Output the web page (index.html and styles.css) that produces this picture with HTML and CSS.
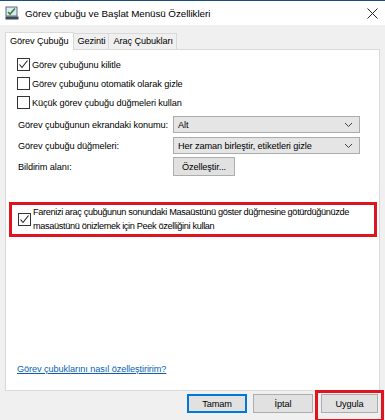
FILE: index.html
```html
<!DOCTYPE html>
<html lang="tr">
<head>
<meta charset="utf-8">
<link rel="stylesheet" href="styles.css">
</head>
<body>
<div class="window">
  <div class="titlebar">
    <svg class="appicon" width="14" height="14" viewBox="0 0 14 14">
      <rect x="1" y="1" width="11" height="9" fill="#dfe9f5" stroke="#5a6a7a" stroke-width="1"/>
      <path d="M3 6 L5 8 L10 2.5" fill="none" stroke="#2a8a2a" stroke-width="1.6"/>
      <rect x="0.5" y="10.5" width="13" height="3" fill="#3b4a5a"/>
    </svg>
    <span class="title">Görev çubuğu ve Başlat Menüsü Özellikleri</span>
    <svg class="close" width="11" height="11" viewBox="0 0 11 11">
      <path d="M0.5 0.5 L10.5 10.5 M10.5 0.5 L0.5 10.5" stroke="#222" stroke-width="1"/>
    </svg>
  </div>
  <div class="content">
    <div class="tabs">
      <div class="tab active">Görev Çubuğu</div>
      <div class="tab">Gezinti</div>
      <div class="tab">Araç Çubukları</div>
    </div>
    <div class="panel">
      <div class="check-row">
        <span class="box checked"><svg width="11" height="11" viewBox="0 0 11 11"><path d="M1.5 5.5 L4 8.5 L9.5 1.5" fill="none" stroke="#222" stroke-width="1.1"/></svg></span>
        <span>Görev çubuğunu kilitle</span>
      </div>
      <div class="check-row">
        <span class="box"></span>
        <span>Görev çubuğunu otomatik olarak gizle</span>
      </div>
      <div class="check-row">
        <span class="box"></span>
        <span>Küçük görev çubuğu düğmeleri kullan</span>
      </div>
      <div class="field-row first">
        <span class="label">Görev çubuğunun ekrandaki konumu:</span>
        <div class="select"><span>Alt</span><svg width="9" height="6" viewBox="0 0 9 6"><path d="M1 1 L4.5 4.5 L8 1" fill="none" stroke="#444" stroke-width="1"/></svg></div>
      </div>
      <div class="field-row">
        <span class="label">Görev çubuğu düğmeleri:</span>
        <div class="select"><span>Her zaman birleştir, etiketleri gizle</span><svg width="9" height="6" viewBox="0 0 9 6"><path d="M1 1 L4.5 4.5 L8 1" fill="none" stroke="#444" stroke-width="1"/></svg></div>
      </div>
      <div class="field-row">
        <span class="label">Bildirim alanı:</span>
        <div class="button small">Özelleştir...</div>
      </div>
      <div class="highlight">
        <span class="box checked"><svg width="11" height="11" viewBox="0 0 11 11"><path d="M1.5 5.5 L4 8.5 L9.5 1.5" fill="none" stroke="#222" stroke-width="1.1"/></svg></span>
        <span class="hl-text">Farenizi araç çubuğunun sonundaki Masaüstünü göster düğmesine götürdüğünüzde masaüstünü önizlemek için Peek özelliğini kullan</span>
      </div>
      <div class="spacer"></div>
      <a class="link" href="#">Görev çubuklarını nasıl özelleştiririm?</a>
    </div>
    <div class="footer">
      <div class="button default">Tamam</div>
      <div class="button">İptal</div>
      <div class="apply-wrap"><div class="button">Uygula</div></div>
    </div>
  </div>
</div>
</body>
</html>
```
FILE: styles.css
```css
* { box-sizing: border-box; }
html, body { margin: 0; padding: 0; }
body {
  font-family: "Liberation Sans", Arial, sans-serif;
  font-size: 9.2px;
  letter-spacing: -0.1px;
  color: #000;
  background: #f0f0f0;
}
.window {
  width: 385px;
  height: 420px;
  background: #f0f0f0;
  border-top: 1px solid #1c4e86;
  display: flex;
  flex-direction: column;
  overflow: hidden;
}
.titlebar {
  height: 24px;
  background: #fff;
  display: flex;
  align-items: center;
  padding: 0 7px 0 5px;
  flex: none;
}
.appicon { flex: none; margin-right: 6px; }
.title { font-size: 9.8px; letter-spacing: -0.05px; flex: 1; color: #000; }
.close { flex: none; }
.content {
  flex: 1;
  display: flex;
  flex-direction: column;
  padding: 7px 5px 0 5px;
}
.tabs {
  display: flex;
  height: 17px;
  padding-left: 1px;
  align-items: flex-end;
}
.tab {
  height: 16px;
  padding: 0 3px 0 4px;
  border: 1px solid #d9d9d9;
  border-bottom: none;
  margin-left: -1px;
  background: #f0f0f0;
  line-height: 15px;
  white-space: nowrap;
}
.tab.active {
  height: 18px;
  background: #fff;
  position: relative;
  z-index: 1;
  margin-bottom: -1px;
  padding: 0 4px;
  line-height: 16px;
}
.panel {
  height: 342px;
  background: #fff;
  border: 1px solid #d9d9d9;
  display: flex;
  flex-direction: column;
  padding: 5px 10px 10px 11px;
}
.check-row {
  display: flex;
  align-items: center;
  height: 19px;
  white-space: nowrap;
}
.box {
  width: 13px;
  height: 13px;
  border: 1px solid #333;
  background: #fff;
  flex: none;
  margin-right: 2px;
  display: flex;
  align-items: center;
  justify-content: center;
}
.field-row {
  display: flex;
  align-items: center;
  height: 21px;
  padding-left: 1px;
}
.field-row.first { margin-top: 2px; }
.label { width: 155px; flex: none; white-space: nowrap; }
.select {
  width: 187px;
  height: 17px;
  background: #e5e5e5;
  border: 1px solid #acacac;
  display: flex;
  align-items: center;
  justify-content: space-between;
  padding: 0 6px 0 4px;
  white-space: nowrap;
}
.button {
  height: 19px;
  background: #e1e1e1;
  border: 1px solid #adadad;
  display: flex;
  align-items: center;
  justify-content: center;
  white-space: nowrap;
}
.button.small { width: 62px; height: 19px; }
.highlight {
  margin: 25px -8px 0 -8px;
  border: 3px solid #e0141e;
  display: flex;
  align-items: flex-start;
  padding: 1px 6px 1px 6px;
  line-height: 13.5px;
}
.highlight .box { margin-top: 7px; }
.hl-text { width: 345px; letter-spacing: -0.35px; }
.spacer { flex: 1; }
.link {
  color: #0a5fb4;
  text-decoration: underline;
  line-height: 14px;
  margin-bottom: 4px;
}
.footer {
  display: flex;
  justify-content: flex-end;
  align-items: flex-start;
  gap: 6px;
  height: 30px;
  padding-top: 3px;
}
.footer .button { width: 60px; }
.footer .button.default { border: 1px solid #0078d7; box-shadow: inset 0 0 0 1px #0078d7; }
.apply-wrap {
  border: 3px solid #e0141e;
  padding: 1px 3px 6px 3px;
  margin-right: -4px;
  margin-left: -4px;
  margin-top: -4px;
}
.apply-wrap .button { width: 57px; }
```
